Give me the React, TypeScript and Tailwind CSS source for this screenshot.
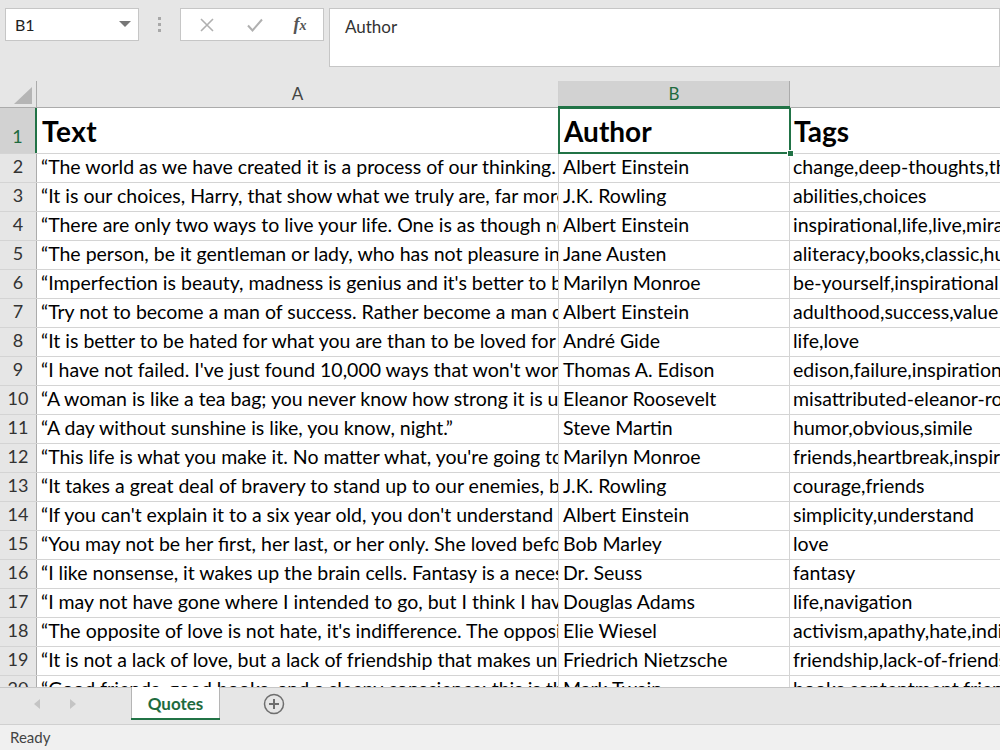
import React from "react";

const rows: [string, string, string][] = [
  ["“The world as we have created it is a process of our thinking. It cannot be changed without changing our thinking.”", "Albert Einstein", "change,deep-thoughts,thinking,world"],
  ["“It is our choices, Harry, that show what we truly are, far more than our abilities.”", "J.K. Rowling", "abilities,choices"],
  ["“There are only two ways to live your life. One is as though nothing is a miracle. The other is as though everything is a miracle.”", "Albert Einstein", "inspirational,life,live,miracle,miracles"],
  ["“The person, be it gentleman or lady, who has not pleasure in a good novel, must be intolerably stupid.”", "Jane Austen", "aliteracy,books,classic,humor"],
  ["“Imperfection is beauty, madness is genius and it's better to be absolutely ridiculous than absolutely boring.”", "Marilyn Monroe", "be-yourself,inspirational"],
  ["“Try not to become a man of success. Rather become a man of value.”", "Albert Einstein", "adulthood,success,value"],
  ["“It is better to be hated for what you are than to be loved for what you are not.”", "André Gide", "life,love"],
  ["“I have not failed. I've just found 10,000 ways that won't work.”", "Thomas A. Edison", "edison,failure,inspirational,paraphrased"],
  ["“A woman is like a tea bag; you never know how strong it is until it's in hot water.”", "Eleanor Roosevelt", "misattributed-eleanor-roosevelt"],
  ["“A day without sunshine is like, you know, night.”", "Steve Martin", "humor,obvious,simile"],
  ["“This life is what you make it. No matter what, you're going to mess up sometimes, it's a universal truth.”", "Marilyn Monroe", "friends,heartbreak,inspirational,life,love,sisters"],
  ["“It takes a great deal of bravery to stand up to our enemies, but just as much to stand up to our friends.”", "J.K. Rowling", "courage,friends"],
  ["“If you can't explain it to a six year old, you don't understand it yourself.”", "Albert Einstein", "simplicity,understand"],
  ["“You may not be her first, her last, or her only. She loved before she may love again.”", "Bob Marley", "love"],
  ["“I like nonsense, it wakes up the brain cells. Fantasy is a necessary ingredient in living.”", "Dr. Seuss", "fantasy"],
  ["“I may not have gone where I intended to go, but I think I have ended up where I needed to be.”", "Douglas Adams", "life,navigation"],
  ["“The opposite of love is not hate, it's indifference. The opposite of art is not ugliness, it's indifference.”", "Elie Wiesel", "activism,apathy,hate,indifference,inspirational,love"],
  ["“It is not a lack of love, but a lack of friendship that makes unhappy marriages.”", "Friedrich Nietzsche", "friendship,lack-of-friendship,lack-of-love,love,marriage"],
  ["“Good friends, good books, and a sleepy conscience: this is the ideal life.”", "Mark Twain", "books,contentment,friends,friendship,life"],
];

const font = { fontFamily: "Lato, 'Liberation Sans', sans-serif" };

export default function App() {
  return (
    <div className="w-[1000px] h-[750px] overflow-hidden flex flex-col bg-[#e6e6e6] text-black" style={font}>
      {/* formula bar area */}
      <div className="h-[81px] shrink-0 flex items-start pt-[8px]">
        <div className="ml-[5px] w-[134px] h-[33px] bg-white border border-[#c6c6c6] flex items-center justify-between pl-[9px] pr-[7px]">
          <span className="text-[16px] text-[#222]">B1</span>
          <svg width="12" height="7" viewBox="0 0 12 7"><path d="M0 0 L12 0 L6 6 Z" fill="#777" /></svg>
        </div>
        <div className="w-[41px] h-[33px] flex flex-col items-center justify-center gap-[3px]">
          <div className="w-[3px] h-[3px] bg-[#a8a8a8]" />
          <div className="w-[3px] h-[3px] bg-[#a8a8a8]" />
          <div className="w-[3px] h-[3px] bg-[#a8a8a8]" />
        </div>
        <div className="w-[144px] h-[33px] bg-white border border-[#c6c6c6] flex items-center">
          <div className="w-[48px] flex justify-center pl-[3px]">
            <svg width="14" height="14" viewBox="0 0 14 14"><path d="M1 1 L13 13 M13 1 L1 13" stroke="#b0b0b0" strokeWidth="1.6" /></svg>
          </div>
          <div className="w-[48px] flex justify-center pl-[3px]">
            <svg width="16" height="14" viewBox="0 0 16 14"><path d="M1 7.5 L5.5 12.5 L15 1.5" stroke="#b0b0b0" strokeWidth="2" fill="none" /></svg>
          </div>
          <div className="w-[46px] flex justify-center">
            <span className="text-[18px] italic font-bold text-[#555]" style={{ fontFamily: "'Liberation Serif', serif" }}>f<span className="text-[14px]">x</span></span>
          </div>
        </div>
        <div className="ml-[5px] flex-1 h-[59px] bg-white border border-[#c6c6c6] pl-[15px] pt-[5px]">
          <span className="text-[17px] text-[#333]">Author</span>
        </div>
      </div>

      {/* column headers */}
      <div className="h-[27px] shrink-0 flex border-b border-[#ababab]">
        <div className="w-[37px] border-r border-[#ababab] flex items-end justify-end pr-[4px] pb-[3px]">
          <svg width="18" height="17" viewBox="0 0 18 17"><path d="M18 0 L18 17 L0 17 Z" fill="#b5b5b5" /></svg>
        </div>
        <div className="w-[522px] border-r border-[#d0d0d0] flex items-center justify-center text-[17px] text-[#444]">A</div>
        <div className="w-[231px] bg-[#d2d2d2] border-r border-[#ababab] flex items-center justify-center text-[17px] text-[#1e6b3e] relative">
          B
          <div className="absolute left-[-1px] right-[-1px] bottom-[-1px] h-[2px] bg-[#217346]" />
        </div>
        <div className="flex-1" />
      </div>

      {/* grid */}
      <div className="flex-1 overflow-hidden bg-white flex flex-col">
        {/* row 1 */}
        <div className="h-[46px] shrink-0 flex border-b border-[#d4d4d4]">
          <div className="w-[37px] shrink-0 bg-[#d2d2d2] border-r-2 border-[#217346] flex items-end justify-center pb-[3px] text-[18px] text-[#1e6b3e]">1</div>
          <div className="w-[522px] shrink-0 border-r border-[#d4d4d4] flex items-end pl-[5px] pb-[1px] text-[28px] font-bold overflow-hidden whitespace-nowrap tracking-[0.5px]">Text</div>
          <div className="w-[231px] shrink-0 flex items-end pl-[5px] pb-[1px] text-[28px] font-bold relative">
            Author
            <div className="absolute left-[-1px] top-[-1px] right-[-1px] bottom-[-1px] border-2 border-[#217346]" />
            <div className="absolute right-[-4px] bottom-[-4px] w-[7px] h-[7px] bg-[#217346] border border-white" />
          </div>
          <div className="flex-1 border-l border-[#d4d4d4] flex items-end pl-[3px] pb-[1px] text-[28px] font-bold whitespace-nowrap overflow-hidden">Tags</div>
        </div>
        {rows.map((r, i) => (
          <div key={i} className="h-[29px] shrink-0 flex border-b border-[#d4d4d4]">
            <div className="w-[37px] shrink-0 bg-[#e6e6e6] border-r border-[#ababab] flex items-end justify-center pb-[2px] text-[18px] text-[#333]">{i + 2}</div>
            <div className="w-[522px] shrink-0 border-r border-[#d4d4d4] flex items-end pl-[4px] pb-[1px] text-[19.5px] overflow-hidden whitespace-nowrap">{r[0]}</div>
            <div className="w-[231px] shrink-0 border-r border-[#d4d4d4] flex items-end pl-[4px] pb-[1px] text-[19.5px] overflow-hidden whitespace-nowrap">{r[1]}</div>
            <div className="flex-1 flex items-end pl-[3px] pb-[1px] text-[19.5px] overflow-hidden whitespace-nowrap">{r[2]}</div>
          </div>
        ))}
      </div>

      {/* sheet tabs */}
      <div className="h-[37px] shrink-0 flex items-start border-t border-[#c6c6c6] bg-[#e6e6e6]">
        <div className="w-[131px] h-[32px] flex items-center">
          <svg className="ml-[34px]" width="6" height="10" viewBox="0 0 6 10"><path d="M6 0 L6 10 L0 5 Z" fill="#c4c4c4" /></svg>
          <svg className="ml-[30px]" width="6" height="10" viewBox="0 0 6 10"><path d="M0 0 L0 10 L6 5 Z" fill="#c4c4c4" /></svg>
        </div>
        <div className="mt-[-1px] w-[89px] h-[33px] bg-white border-l border-r border-[#b5b5b5] flex items-center justify-center relative">
          <span className="text-[17px] font-bold text-[#1e6b3e]">Quotes</span>
          <div className="absolute left-[-1px] right-[-1px] bottom-0 h-[2px] bg-[#217346]" />
        </div>
        <div className="ml-[43px] h-[32px] flex items-center">
          <svg width="22" height="22" viewBox="0 0 22 22">
            <circle cx="11" cy="11" r="9.5" fill="none" stroke="#6e6e6e" strokeWidth="1.5" />
            <path d="M11 6 L11 16 M6 11 L16 11" stroke="#6e6e6e" strokeWidth="2" />
          </svg>
        </div>
      </div>

      {/* status bar */}
      <div className="h-[26px] shrink-0 border-t border-[#d0d0d0] bg-[#f0f0f0] flex items-center pl-[10px]">
        <span className="text-[15px] text-[#444]">Ready</span>
      </div>
    </div>
  );
}
